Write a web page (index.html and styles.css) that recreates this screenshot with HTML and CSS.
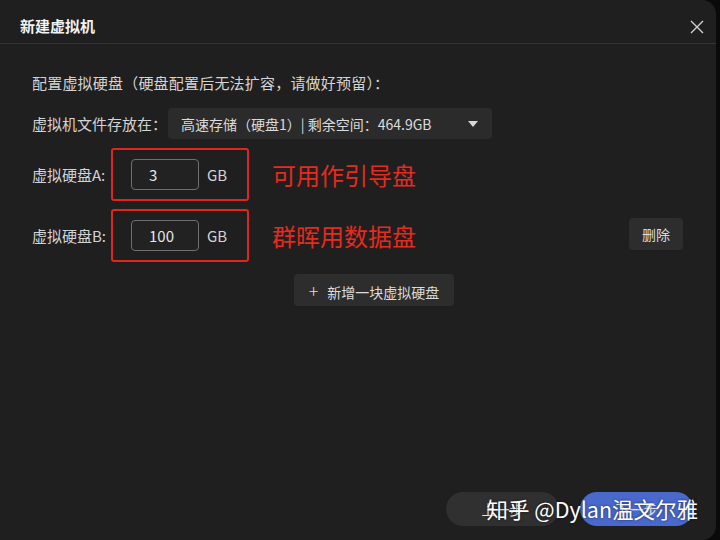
FILE: index.html
```html
<!doctype html>
<html>
<head>
<meta charset="utf-8">
<title>新建虚拟机</title>
<link rel="stylesheet" href="styles.css">
</head>
<body>
<div class="dialog">
	<div class="head">
		<span class="title">新建虚拟机</span>
		<svg class="close" width="14" height="14" viewBox="0 0 14 14"><path d="M1 1L13 13M13 1L1 13" stroke="#d0d0d0" stroke-width="1.4"/></svg>
	</div>
	<div class="body">
		<p class="intro">配置虚拟硬盘（硬盘配置后无法扩容，请做好预留）：</p>
		<div class="row">
			<span class="label">虚拟机文件存放在：</span>
			<div class="select">
				<span>高速存储（硬盘1）| 剩余空间：464.9GB</span>
				<svg width="10" height="6" viewBox="0 0 10 6"><path d="M0 0H10L5 6Z" fill="#d8d8d8"/></svg>
			</div>
		</div>
		<div class="disk disk-a">
			<span class="label">虚拟硬盘A:</span>
			<div class="mark">
				<div class="num">3</div>
				<span class="unit">GB</span>
			</div>
			<span class="note">可用作引导盘</span>
		</div>
		<div class="disk disk-b">
			<span class="label">虚拟硬盘B:</span>
			<div class="mark">
				<div class="num">100</div>
				<span class="unit">GB</span>
			</div>
			<span class="note">群晖用数据盘</span>
			<button class="btn del">删除</button>
		</div>
		<div class="addrow">
			<button class="btn add"><span class="plus">+</span>新增一块虚拟硬盘</button>
		</div>
	</div>
	<div class="foot">
		<button class="pill prev">上一步</button>
		<button class="pill ok">下一步</button>
		<span class="wm">知乎 @Dylan温文尔雅</span>
	</div>
</div>
</body>
</html>
```

FILE: styles.css
```css
body {
	margin: 0;
	background: #0a0a0a;
	font-family: "Noto Sans CJK SC", "Noto Sans", sans-serif;
	color: #d6d6d6;
}
p {
	margin: 0;
}
.dialog {
	width: 716px;
	height: 540px;
	background: #1f1f20;
	border-radius: 0 14px 14px 0;
	display: flex;
	flex-direction: column;
	position: relative;
}
.head {
	height: 44px;
	border-bottom: 1px solid #343435;
	display: flex;
	align-items: flex-start;
	justify-content: space-between;
	padding: 15px 12px 0 20px;
	box-sizing: border-box;
}
.title {
	font-size: 15px;
	line-height: 22px;
	font-weight: bold;
	color: #f2f2f2;
}
.close {
	margin-top: 5px;
}
.body {
	flex: 1;
	padding: 28px 0 0 32px;
	font-size: 15px;
}
.intro {
	line-height: 22px;
	color: #d4d4d4;
	letter-spacing: 0.2px;
}
.row {
	display: flex;
	align-items: center;
	margin-top: 14px;
}
.label {
	color: #d4d4d4;
	width: 79px;
}
.row .label {
	width: 136px;
}
.select {
	width: 324px;
	height: 31px;
	background: #2b2b2c;
	border-radius: 4px;
	display: flex;
	align-items: center;
	justify-content: space-between;
	padding: 0 14px 0 13px;
	box-sizing: border-box;
	color: #dcdcdc;
	font-size: 14px;
}
.disk {
	display: flex;
	align-items: center;
}
.disk-a {
	margin-top: 9px;
}
.disk-b {
	margin-top: 8px;
}
.mark {
	width: 138px;
	height: 53px;
	border: 2px solid #e0261c;
	border-radius: 3px;
	box-sizing: border-box;
	display: flex;
	align-items: center;
	padding-left: 18px;
}
.num {
	width: 68px;
	height: 31px;
	border: 1px solid #6f6f70;
	border-radius: 4px;
	box-sizing: border-box;
	background: #222223;
	display: flex;
	align-items: center;
	padding-left: 17px;
	color: #e6e6e6;
}
.unit {
	margin-left: 8px;
	color: #d4d4d4;
}
.note {
	margin-left: 23px;
	font-size: 24px;
	color: #e52a1e;
}
.btn {
	font-family: inherit;
	font-size: 14px;
	color: #dcdcdc;
	background: #2d2d2e;
	border: 0;
	border-radius: 4px;
	height: 32px;
	padding: 0 13px;
}
.del {
	margin-left: auto;
	margin-right: 33px;
	width: 54px;
	padding: 0;
	align-self: flex-start;
	margin-top: 9px;
}
.addrow {
	display: flex;
	padding-left: 262px;
	margin-top: 12px;
}
.add {
	width: 160px;
	padding: 0;
}
.plus {
	font-size: 18px;
	margin-right: 9px;
	font-weight: 300;
}
.foot {
	height: 60px;
	display: flex;
	align-items: flex-start;
	justify-content: flex-end;
	gap: 21px;
	padding: 12px 23px 0 0;
	box-sizing: border-box;
}
.pill {
	width: 113px;
	height: 34px;
	border: 0;
	border-radius: 17px;
	font-family: inherit;
	font-size: 14px;
	color: #e6e6e6;
}
.prev {
	background: #303031;
}
.ok {
	background: #4a69cc;
}
.wm {
	position: absolute;
	right: 18px;
	bottom: 16px;
	font-size: 21.5px;
	color: #ffffff;
	text-shadow: 0 0 3px rgba(0, 0, 0, 0.6);
}
```
